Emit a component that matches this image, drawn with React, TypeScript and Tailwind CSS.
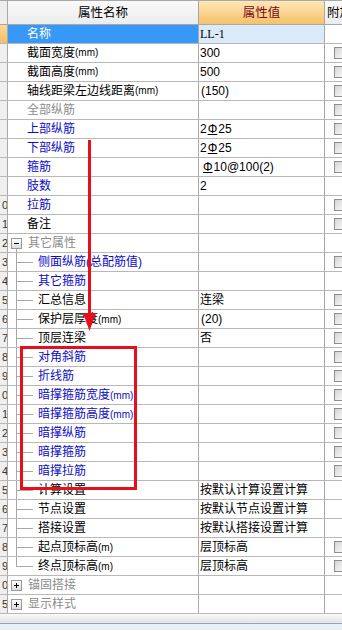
import React from 'react';

type Kind = 'top' | 'open' | 'closed' | 'child' | 'last';
type Color = 'black' | 'blue' | 'gray';
type Row = {
  num: string;
  name: React.ReactNode;
  color: Color;
  kind: Kind;
  value?: React.ReactNode;
  check?: boolean;
  selected?: boolean;
};

const Mm = ({ t = 'mm' }: { t?: string }) => (
  <span className="text-[10px] tracking-[0px]">({t})</span>
);

const Bar = () => <span className="underline underline-offset-[1px] mx-[1px]">Φ</span>;

const rows: Row[] = [
  { num: '', name: '名称', color: 'black', kind: 'top', value: <span className="font-['Liberation_Serif',serif]">LL-1</span>, selected: true },
  { num: '', name: <>截面宽度<Mm /></>, color: 'black', kind: 'top', value: '300', check: true },
  { num: '', name: <>截面高度<Mm /></>, color: 'black', kind: 'top', value: '500', check: true },
  { num: '', name: <>轴线距梁左边线距离<Mm /></>, color: 'black', kind: 'top', value: <span className="ml-[1px]">(150)</span>, check: true },
  { num: '', name: '全部纵筋', color: 'gray', kind: 'top', value: '', check: true },
  { num: '', name: '上部纵筋', color: 'blue', kind: 'top', value: <>2<Bar />25</>, check: true },
  { num: '', name: '下部纵筋', color: 'blue', kind: 'top', value: <>2<Bar />25</>, check: true },
  { num: '', name: '箍筋', color: 'blue', kind: 'top', value: <span className="ml-[2px]"><Bar />10@100(2)</span>, check: true },
  { num: '', name: '肢数', color: 'blue', kind: 'top', value: '2' },
  { num: '0', name: '拉筋', color: 'blue', kind: 'top', value: '', check: true },
  { num: '1', name: '备注', color: 'black', kind: 'top', value: '', check: true },
  { num: '2', name: '其它属性', color: 'gray', kind: 'open', value: '' },
  { num: '3', name: '侧面纵筋(总配筋值)', color: 'blue', kind: 'child', value: '', check: true },
  { num: '4', name: '其它箍筋', color: 'blue', kind: 'child', value: '' },
  { num: '5', name: '汇总信息', color: 'black', kind: 'child', value: '连梁', check: true },
  { num: '6', name: <>保护层厚度<Mm /></>, color: 'black', kind: 'child', value: <span className="ml-[1px]">(20)</span>, check: true },
  { num: '7', name: '顶层连梁', color: 'black', kind: 'child', value: '否', check: true },
  { num: '8', name: '对角斜筋', color: 'blue', kind: 'child', value: '', check: true },
  { num: '9', name: '折线筋', color: 'blue', kind: 'child', value: '', check: true },
  { num: '0', name: <>暗撑箍筋宽度<Mm /></>, color: 'blue', kind: 'child', value: '', check: true },
  { num: '1', name: <>暗撑箍筋高度<Mm /></>, color: 'blue', kind: 'child', value: '', check: true },
  { num: '2', name: '暗撑纵筋', color: 'blue', kind: 'child', value: '', check: true },
  { num: '3', name: '暗撑箍筋', color: 'blue', kind: 'child', value: '', check: true },
  { num: '4', name: '暗撑拉筋', color: 'blue', kind: 'child', value: '', check: true },
  { num: '5', name: '计算设置', color: 'black', kind: 'child', value: '按默认计算设置计算' },
  { num: '6', name: '节点设置', color: 'black', kind: 'child', value: '按默认节点设置计算' },
  { num: '7', name: '搭接设置', color: 'black', kind: 'child', value: '按默认搭接设置计算' },
  { num: '8', name: <>起点顶标高<Mm t="m" /></>, color: 'black', kind: 'child', value: '层顶标高', check: true },
  { num: '9', name: <>终点顶标高<Mm t="m" /></>, color: 'black', kind: 'last', value: '层顶标高', check: true },
  { num: '0', name: '锚固搭接', color: 'gray', kind: 'closed', value: '' },
  { num: '5', name: '显示样式', color: 'gray', kind: 'closed', value: '' },
];

const colorCls: Record<Color, string> = {
  black: 'text-[#000000]',
  blue: 'text-[#0b0bc4]',
  gray: 'text-[#8c8c8c]',
};

function Expander({ open }: { open: boolean }) {
  return (
    <div className="w-[11px] self-stretch flex flex-col shrink-0">
      <div className="flex-1" />
      <div className="w-[11px] h-[11px] border border-[#9a9a9a] bg-gradient-to-b from-[#ffffff] to-[#dcdcdc] flex items-center justify-center relative">
        <div className="w-[5px] h-[1px] bg-[#000]" />
        {!open && <div className="absolute w-[1px] h-[5px] bg-[#000]" />}
      </div>
      <div className={`flex-1 ml-[5px] ${open ? 'border-l border-[#a8a8a8]' : ''}`} />
    </div>
  );
}

function Tree({ last }: { last: boolean }) {
  return (
    <div className="w-[17px] self-stretch flex flex-col shrink-0">
      <div className="h-[10px] border-l border-b border-[#a8a8a8]" />
      <div className={`flex-1 ${last ? '' : 'border-l border-[#a8a8a8]'}`} />
    </div>
  );
}

function NameCell({ r }: { r: Row }) {
  const base = `w-[191px] shrink-0 border-r border-[#a8a8a8] flex items-center overflow-hidden whitespace-nowrap ${
    r.selected ? 'bg-[#3898f8] text-white' : colorCls[r.color]
  }`;
  if (r.kind === 'top') {
    return <div className={`${base} pl-[19px]`}>{r.name}</div>;
  }
  if (r.kind === 'open' || r.kind === 'closed') {
    return (
      <div className={`${base} pl-[3px]`}>
        <Expander open={r.kind === 'open'} />
        <span className="ml-[6px]">{r.name}</span>
      </div>
    );
  }
  return (
    <div className={`${base} pl-[8px]`}>
      <Tree last={r.kind === 'last'} />
      <span className="ml-[5px]">{r.name}</span>
    </div>
  );
}

function TableRow({ r }: { r: Row }) {
  return (
    <div className="h-[19px] flex border-b border-[#b8b8b8]">
      <div
        className={`w-[8px] shrink-0 border-r border-[#a8a8a8] overflow-hidden flex items-center justify-end text-[11px] leading-none text-[#333] ${
          r.selected ? 'bg-gradient-to-b from-[#fdd79a] to-[#f8bd66]' : 'bg-[#efefef]'
        }`}
      >
        <span className="-mr-[1px]">{r.num}</span>
      </div>
      <NameCell r={r} />
      <div
        className={`w-[126px] shrink-0 border-r border-[#a8a8a8] flex items-center pl-[1px] whitespace-nowrap overflow-hidden text-black ${
          r.selected ? 'bg-[#dbeafb]' : ''
        }`}
      >
        {r.value}
      </div>
      <div className="flex-1 flex items-center overflow-hidden">
        {r.check && (
          <div className="ml-[9px] w-[12px] h-[12px] shrink-0 border border-[#8e8e8e] bg-gradient-to-br from-[#d6d6d6] to-[#fbfbfb]" />
        )}
      </div>
    </div>
  );
}

export default function App() {
  return (
    <div className="relative w-[342px] h-[631px] overflow-hidden bg-white font-['Liberation_Sans','Noto_Sans_CJK_SC',sans-serif] text-[12px] leading-[18px]">
      {/* header */}
      <div className="h-[25px] flex border-t border-b border-[#a8a8a8] bg-gradient-to-b from-[#fafafa] to-[#ececec]">
        <div className="w-[8px] shrink-0 border-r border-[#a8a8a8] bg-[#eeeeee]" />
        <div className="w-[191px] shrink-0 border-r border-[#a8a8a8] flex items-center justify-center text-[12.5px] text-black">
          属性名称
        </div>
        <div className="w-[126px] shrink-0 border-r border-[#a8a8a8] flex items-center justify-center text-[12.5px] text-[#7a0a1a] bg-gradient-to-b from-[#fde7b6] to-[#f6c267]">
          属性值
        </div>
        <div className="flex-1 flex items-center pl-[2px] whitespace-nowrap overflow-hidden text-[12.5px] text-black">
          附加
        </div>
      </div>
      {rows.map((r, i) => (
        <TableRow key={i} r={r} />
      ))}
      {/* bottom band */}
      <div className="h-[10px] bg-gradient-to-b from-[#fbfbfb] to-[#e2e2e2] border-b border-[#9aa4b0]" />
      <div className="h-[6px] bg-[#eaf0f7]" />

      {/* red annotations */}
      <svg className="absolute left-0 top-0 pointer-events-none" width="342" height="631" viewBox="0 0 342 631">
        <line x1="89.5" y1="140" x2="89.5" y2="316" stroke="#e5101c" strokeWidth="3" />
        <polygon points="83,313 96,313 89.5,331" fill="#e5101c" />
        <rect x="21.5" y="347.5" width="114" height="141" fill="none" stroke="#e5101c" strokeWidth="3" />
      </svg>
    </div>
  );
}
